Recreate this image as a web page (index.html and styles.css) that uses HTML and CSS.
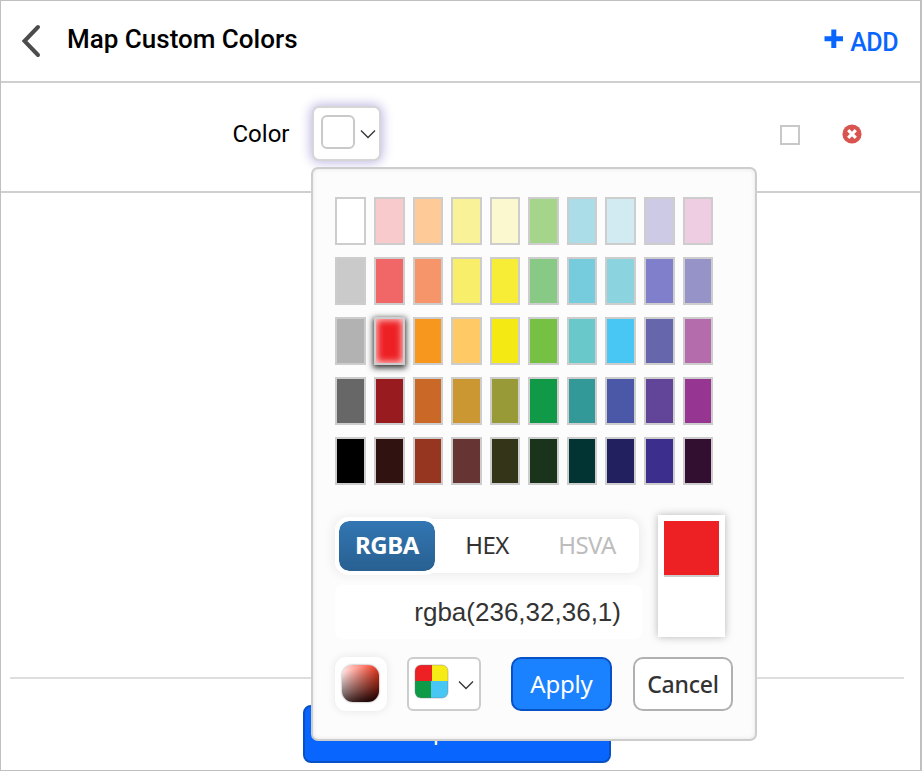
FILE: index.html
```html
<!DOCTYPE html>
<html lang="en">
<head>
<meta charset="utf-8">
<title>Map Custom Colors</title>
<link rel="stylesheet" href="styles.css">
</head>
<body>
<div class="window">
  <header class="header">
    <svg class="back" width="20" height="34" viewBox="0 0 20 34"><path d="M17 3 3.500 17 17 31" fill="none" stroke="#4c4c4c" stroke-width="4" stroke-linecap="round"/></svg>
    <h1 class="title"><span>Map Custom Colors</span></h1>
    <div class="add"><svg width="20" height="20" viewBox="0 0 20 20"><path d="M7.300 0.500h5v6.700H19v5h-6.700V19h-5v-6.800H.500v-5h6.800z" fill="#0866ff"/></svg><span>ADD</span></div>
  </header>
  <section class="row">
    <label class="label">Color</label>
    <div class="picker">
      <span class="picker-swatch"></span>
      <svg width="16" height="10" viewBox="0 0 16 10"><path d="m1 1.500 7 7 7-7" fill="none" stroke="#333" stroke-width="1.300"/></svg>
      <div class="popup">
        <div class="palette" id="palette"></div>
        <div class="values">
          <div class="fields">
            <div class="tabs">
              <span class="tab active"><span>RGBA</span></span>
              <span class="tab"><span>HEX</span></span>
              <span class="tab muted"><span>HSVA</span></span>
            </div>
            <div class="value"><span>rgba(236,32,36,1)</span></div>
          </div>
          <div class="preview"><div class="preview-color"></div></div>
        </div>
        <div class="actions">
          <div class="gradient"><span></span></div>
          <div class="mode">
            <svg width="36" height="36" viewBox="0 0 36 36">
              <defs><clipPath id="tile"><rect x="1" y="1" width="33" height="33" rx="6"/></clipPath></defs>
              <g clip-path="url(#tile)"><path fill="#ed2024" d="M0 0h18v17H0z"/><path fill="#f6eb16" d="M18 0h18v17H18z"/><path fill="#0f9a48" d="M0 17h17v19H0z"/><path fill="#48c6f4" d="M17 17h19v19H17z"/></g>
              <rect class="tile-shade" x="1" y="1" width="33" height="33" rx="6"/>
            </svg>
            <svg width="16" height="10" viewBox="0 0 16 10"><path d="m1 1.500 7 7 7-7" fill="none" stroke="#333" stroke-width="1.300"/></svg>
          </div>
          <button class="btn apply"><span>Apply</span></button>
          <button class="btn cancel"><span>Cancel</span></button>
        </div>
      </div>
    </div>
    <span class="check"></span>
    <svg class="remove" width="20" height="20" viewBox="0 0 20 20"><circle cx="10" cy="10" r="9.600" fill="#d9534f"/><path d="m6.200 6.200 7.600 7.600m0-7.600-7.600 7.600" stroke="#fff" stroke-width="3.200"/></svg>
  </section>
  <footer class="footer"><button class="update">Update</button></footer>
</div>
<script src="palette.js"></script>
</body>
</html>
```
FILE: styles.css
```css
* { box-sizing: border-box; }
body { margin: 0; background: #fff; font-family: Roboto, sans-serif; color: #000; }
span { white-space: nowrap; }
.window { width: 922px; height: 771px; border: 1px solid #c0c0c0; border-right-width: 2px; display: flex; flex-direction: column; overflow: hidden; }
.header { height: 82px; border-bottom: 2px solid #cfcfcf; display: flex; align-items: center; padding: 0 22px 0 20px; }
.title { margin: 0 0 4px 26px; font-size: 26px; line-height: 32px; font-weight: 500; letter-spacing: 0; }
.add { margin-left: auto; display: flex; align-items: center; gap: 6px; color: #0866ff; font: 500 25px/30px Roboto, sans-serif; letter-spacing: -.5px; padding-top: 3px; }
.add svg { margin-bottom: 7px; }
.row { height: 110px; border-bottom: 2px solid #cfcfcf; display: flex; align-items: center; padding: 0 0 5px 231.500px; }
.label { width: 79.500px; font-size: 24px; line-height: 30px; letter-spacing: 0; margin-bottom: 2px; }
.picker { position: relative; width: 69px; height: 55px; margin-bottom: 2px; border: 2px solid #d6d6d6; border-radius: 7px; background: #fff; box-shadow: 0 0 12px 1px #b8b0df; display: flex; align-items: center; padding-left: 7px; }
.picker-swatch { width: 34px; height: 34px; border: 2px solid #c9c9c9; border-radius: 6px; margin: 0 5px 3px 0; }
.check { width: 20px; height: 20px; border: 2px solid #c8c8c8; margin-left: 399px; }
.remove { margin: 0 0 1px 42px; }
.popup { position: absolute; z-index: 2; left: -3px; top: 59px; width: 446px; height: 574px; border: 2px solid #cdcdcd; border-radius: 7px; background: #fcfcfc; box-shadow: inset 0 0 4px #e4e4e4; padding: 28px 22px 0; }
.palette { display: grid; grid-template-columns: repeat(10, 30.570px); grid-auto-rows: 48px; column-gap: 8px; row-gap: 12px; margin-left: .45px; }
.swatch { border: 2px solid #cdcdcd; }
.swatch.selected { box-shadow: 0 2px 6px 1px #333, inset 0 0 7px 1px #ffd6d6; }
.values { display: flex; align-items: flex-start; margin-top: 30px; height: 142px; }
.fields { width: 307px; padding-top: 4px; }
.tabs { width: 304px; height: 54px; display: flex; align-items: center; border-radius: 10px; background: #fff; box-shadow: 0 0 12px #e5e5e5; }
.tab { width: 96px; text-align: center; font: 24px/48px "Noto Sans", sans-serif; letter-spacing: -.6px; color: #333; padding-bottom: 2px; }
.tab.active { flex: none; width: 104px; height: 58px; border: 4px solid #fff; border-radius: 14px; background: linear-gradient(#3276b3, #286091) padding-box; color: #fff; font-weight: 700; letter-spacing: -.4px; }
.tab.muted { width: 104px; color: #bdbdbd; }
.value { height: 54px; margin-top: 12px; padding-right: 21px; border-radius: 8px; background: #fff; text-align: right; font: 26px/54px "Liberation Sans", sans-serif; color: #333; }
.preview { width: 67px; height: 122px; margin-left: 16px; padding: 6px; background: #fff; box-shadow: 0 0 8px #b5b5b5; }
.preview-color { height: 56px; background: #ed2024; border-bottom: 2px solid #cdcdcd; }
.actions { display: flex; height: 54px; }
.gradient { width: 52px; height: 54px; border-radius: 11px; background: #fff; box-shadow: 0 0 8px #e5e5e5; padding: 8px 7px; }
.gradient span { display: block; width: 37px; height: 37px; border-radius: 11px; background: linear-gradient(165deg, transparent 15%, rgba(0, 0, 0, .5) 62%, #100 98%), linear-gradient(to right, #ffe4e4, #ff3b1f); box-shadow: 0 0 2px #777; }
.mode { width: 74px; height: 54px; margin-left: 20px; border: 2px solid #cdcdcd; border-radius: 6px; background: #fff; display: flex; align-items: center; gap: 8px; padding-left: 5px; }
.mode svg:first-child { margin-bottom: 4px; }
.mode svg:last-child { margin-top: 1px; }
.tile-shade { fill: none; stroke: #777; stroke-opacity: .4; }
.btn { height: 54px; padding: 0 0 1px; border: 2px solid #0750c5; border-radius: 10px; font: 24px/46px "Noto Sans", sans-serif; letter-spacing: -.2px; }
.apply { width: 101px; margin-left: 30px; background: #1a82ff; color: #fff; }
.cancel { width: 100px; margin-left: 21px; border-color: #b1b1b1; background: #fff; color: #333; font-weight: 500; font-size: 23px; }
.footer { margin: auto 16px 7px 9px; height: 86px; border-top: 2px solid #dedede; padding: 26px 0 0 293px; }
.update { display: block; width: 308px; height: 58px; border: 2px solid #0750c5; border-radius: 8px; background: #0866ff; color: #fff; padding: 0 1px 8px 0; font: 24px/46px "Noto Sans", sans-serif; }
```
FILE: palette.js
```js
const rows = [
  ['#ffffff', '#f9cacb', '#fdca98', '#faf298', '#fbf7cf', '#a5d48b', '#aadde8', '#d2ebf2', '#cccae5', '#eecce1'],
  ['#cacaca', '#f16667', '#f7956a', '#f8ee6a', '#f7ec36', '#89c986', '#76ccdc', '#8bd3df', '#807fcb', '#9593c8'],
  ['#b2b2b2', '#ed2024', '#f8971d', '#ffca66', '#f5e914', '#76c044', '#69c8ca', '#48c6f4', '#6566ac', '#b56cac'],
  ['#676767', '#971b1f', '#ca6828', '#ca9733', '#979a36', '#109a48', '#339998', '#4a58a7', '#624499', '#973692'],
  ['#000000', '#301211', '#973620', '#663433', '#343418', '#1a341b', '#023434', '#22205f', '#3b2e8c', '#320f31']
];
const palette = document.getElementById('palette');
for (const color of rows.flat()) {
  const swatch = document.createElement('span');
  swatch.className = color === '#ed2024' ? 'swatch selected' : 'swatch';
  swatch.style.background = color;
  palette.append(swatch);
}
```
